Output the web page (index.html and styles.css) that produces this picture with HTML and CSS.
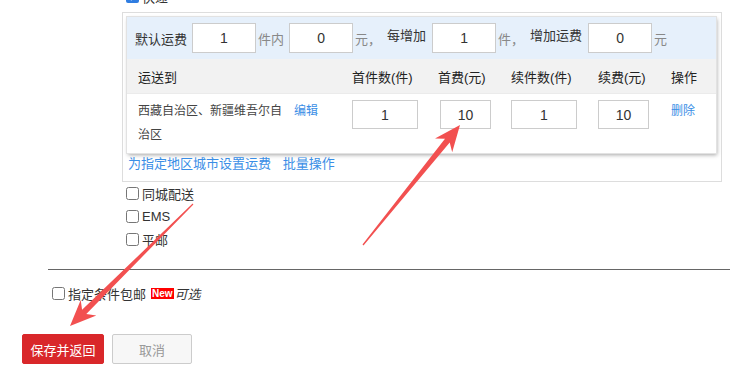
FILE: index.html
```html
<!DOCTYPE html>
<html lang="zh-CN">
<head>
    <meta charset="UTF-8">
    <title>运费模板</title>
    <link rel="stylesheet" href="styles.css">
</head>
<body>
    <div class="form">
        <div class="carriers">
            <label class="check"><input type="checkbox" checked>快递</label>
            <div class="panel">
                <div class="card">
                    <div class="default-fee">
                        <span class="label">默认运费</span>
                        <input class="num" value="1">
                        <span class="unit">件内</span>
                        <input class="num" value="0">
                        <span class="unit">元，</span>
                        <span class="label raised">每增加</span>
                        <input class="num" value="1">
                        <span class="unit">件，</span>
                        <span class="label raised">增加运费</span>
                        <input class="num" value="0">
                        <span class="unit">元</span>
                    </div>
                    <div class="grid head">
                        <div class="cell first">运送到</div>
                        <div class="cell">首件数(件)</div>
                        <div class="cell narrow">首费(元)</div>
                        <div class="cell">续件数(件)</div>
                        <div class="cell">续费(元)</div>
                        <div class="cell">操作</div>
                    </div>
                    <div class="grid row">
                        <div class="cell first">
                            <span class="region">西藏自治区、新疆维吾尔自治区</span>
                            <a href="#" class="link">编辑</a>
                        </div>
                        <div class="cell"><input class="num wide" value="1"></div>
                        <div class="cell"><input class="num small" value="10"></div>
                        <div class="cell"><input class="num wide" value="1"></div>
                        <div class="cell"><input class="num small" value="10"></div>
                        <div class="cell"><a href="#" class="link">删除</a></div>
                    </div>
                </div>
                <div class="panel-links">
                    <a href="#">为指定地区城市设置运费</a>
                    <a href="#">批量操作</a>
                </div>
            </div>
            <label class="check"><input type="checkbox">同城配送</label>
            <label class="check"><input type="checkbox">EMS</label>
            <label class="check"><input type="checkbox">平邮</label>
        </div>

        <hr class="divider">

        <div class="free-row">
            <label class="check"><input type="checkbox">指定条件包邮</label>
            <span class="badge">New</span>
            <em class="optional">可选</em>
        </div>

        <div class="actions">
            <button class="btn primary">保存并返回</button>
            <button class="btn">取消</button>
        </div>
    </div>

    <svg class="arrows" width="730" height="377" viewBox="0 0 730 377">
        <polygon points="362.5,244.6 445,138.7 435,138.4 460,125 452.2,152.2 449.7,142.5 363.5,245.4" />
        <polygon points="192.6,203.6 82.1,309.8 80.7,299.9 70,326 96.3,315.5 86.3,314 193.4,204.4" />
    </svg>
</body>
</html>
```

FILE: styles.css
```css
body {
    margin: 0;
    font-family: "Liberation Sans", "Noto Sans CJK SC", sans-serif;
    font-size: 13px;
    color: #333;
    background: #fff;
    position: relative;
    width: 730px;
    height: 377px;
    overflow: hidden;
}
.form {
    margin-top: -15px;
}
.carriers {
    margin-left: 122px;
    width: 600px;
}
.check {
    display: flex;
    align-items: center;
    height: 23px;
    font-size: 13px;
    color: #333;
}
.check input {
    width: 13px;
    height: 13px;
    margin: 0 3px 0 4px;
    accent-color: #2f7de1;
}
.carriers > .check:first-child {
    margin-bottom: 4px;
}
.panel {
    border: 1px solid #ddd;
    padding: 4px 5px 0 4px;
}
.card {
    background: #fff;
    box-shadow: 0 0 0 1px #e2e2e2, 1px 2px 4px rgba(0, 0, 0, 0.35);
}
.default-fee {
    display: flex;
    align-items: center;
    background: #e6f0fb;
    padding: 6px 0 6px 8px;
}
.default-fee .label {
    color: #333;
}
.default-fee .raised {
    margin-left: 6px;
    align-self: flex-start;
    padding-top: 2px;
}
.default-fee .raised + .num {
    margin-left: 6px;
}
.default-fee .unit {
    color: #888;
}
.num {
    box-sizing: border-box;
    width: 64px;
    height: 30px;
    margin: 0 2px 0 5px;
    border: 1px solid #ccc;
    text-align: center;
    font-family: "Liberation Sans", sans-serif;
    font-size: 14px;
    color: #333;
    padding: 0;
}
.grid {
    display: grid;
    grid-template-columns: 219px 88px 71px 87px 73px 1fr;
}
.head {
    background: #f2f2f2;
    height: 35px;
    align-items: center;
    border-bottom: 1px solid #ebebeb;
    box-sizing: border-box;
    color: #222;
}
.cell {
    padding-left: 6px;
}
.cell.first {
    padding-left: 11px;
}
.head .narrow {
    padding-left: 4px;
}
.row {
    padding: 5px 0 6px;
    align-items: start;
}
.row .cell.first {
    display: flex;
    align-items: flex-start;
    line-height: 24px;
    color: #444;
}
.region {
    width: 146px;
    font-size: 12px;
}
.link {
    color: #3a8ee6;
    text-decoration: none;
    margin-left: 10px;
    line-height: 24px;
    font-size: 12px;
}
.row .cell:last-child .link {
    margin-left: 0;
}
.row .num {
    margin: 1px 0 0;
    height: 29px;
}
.row .num.wide {
    width: 66px;
}
.row .num.small {
    width: 51px;
}
.panel-links {
    line-height: 20px;
    padding: 1px 0 7px 1px;
}
.panel-links a {
    color: #3a8ee6;
    text-decoration: none;
    margin-right: 8px;
}
.divider {
    border: 0;
    border-top: 1px solid #666;
    margin: 18px 0 0 48px;
}
.free-row {
    display: flex;
    align-items: center;
    margin: 12px 0 0 48px;
}
.badge {
    background: #f00;
    color: #fff;
    font-size: 10px;
    font-weight: bold;
    line-height: 11px;
    padding: 0 1px;
    margin-left: 5px;
}
.optional {
    margin-left: 1px;
    color: #333;
}
.actions {
    display: flex;
    gap: 8px;
    margin: 29px 0 0 22px;
}
.btn {
    height: 30px;
    width: 80px;
    border: 1px solid #ccc;
    border-radius: 2px;
    background: #f7f7f7;
    color: #999;
    font-family: "Liberation Sans", "Noto Sans CJK SC", sans-serif;
    font-size: 13px;
    padding: 0;
}
.btn.primary {
    width: 82px;
    background: #d9272a;
    border-color: #d9272a;
    color: #fff;
}
.arrows {
    position: absolute;
    top: 0;
    left: 0;
    pointer-events: none;
}
.arrows polygon {
    fill: #f25050;
}
```
